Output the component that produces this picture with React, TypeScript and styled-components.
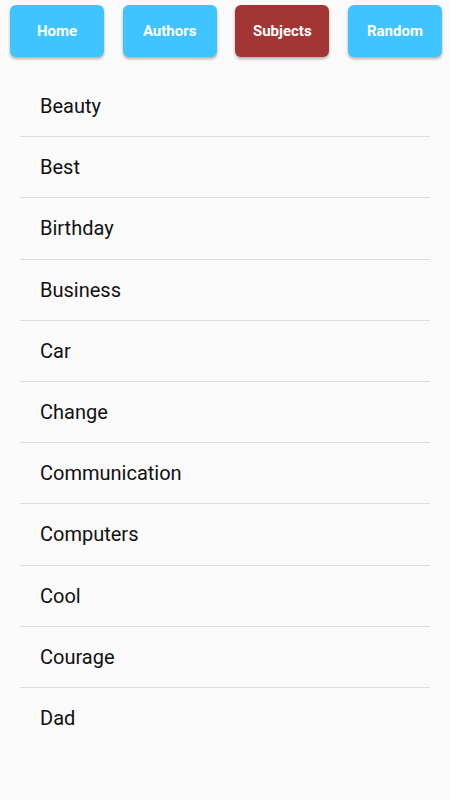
import React from 'react';
import styled, { createGlobalStyle } from 'styled-components';

const GlobalStyle = createGlobalStyle`
    html, body {
        margin: 0;
        padding: 0;
        background: #fafafa;
        font-family: Roboto, 'Noto Sans', sans-serif;
    }
`;

const Page = styled.div`
    width: 450px;
    min-height: 800px;
    background: #fafafa;
`;

const NavBar = styled.nav`
    display: flex;
    justify-content: space-between;
    padding: 5px 8px 0 10px;
    height: 52px;
`;

const NavButton = styled.button<{ $active?: boolean }>`
    width: 94px;
    height: 52px;
    border: none;
    border-radius: 6px;
    background: ${(p) => (p.$active ? '#a33535' : '#40c4ff')};
    color: #fff;
    font-family: Roboto, sans-serif;
    font-weight: 700;
    font-size: 15px;
    box-shadow: 0 2px 3px rgba(0, 0, 0, 0.3);
    cursor: pointer;
`;

const List = styled.ul`
    list-style: none;
    margin: 19px 20px 0;
    padding: 0;
`;

const Item = styled.li<{ $last?: boolean }>`
    box-sizing: border-box;
    height: 61.2px;
    display: flex;
    align-items: center;
    padding-left: 20px;
    font-size: 20px;
    font-weight: 400;
    color: #111;
    border-bottom: ${(p) => (p.$last ? 'none' : '1px solid #dcdcdc')};
`;

const tabs = ['Home', 'Authors', 'Subjects', 'Random'];

const subjects = [
    'Beauty',
    'Best',
    'Birthday',
    'Business',
    'Car',
    'Change',
    'Communication',
    'Computers',
    'Cool',
    'Courage',
    'Dad',
];

export default function App() {
    return (
        <Page>
            <GlobalStyle />
            <NavBar>
                {tabs.map((t) => (
                    <NavButton key={t} $active={t === 'Subjects'}>
                        {t}
                    </NavButton>
                ))}
            </NavBar>
            <List>
                {subjects.map((s, i) => (
                    <Item key={s} $last={i === subjects.length - 1}>
                        {s}
                    </Item>
                ))}
            </List>
        </Page>
    );
}
